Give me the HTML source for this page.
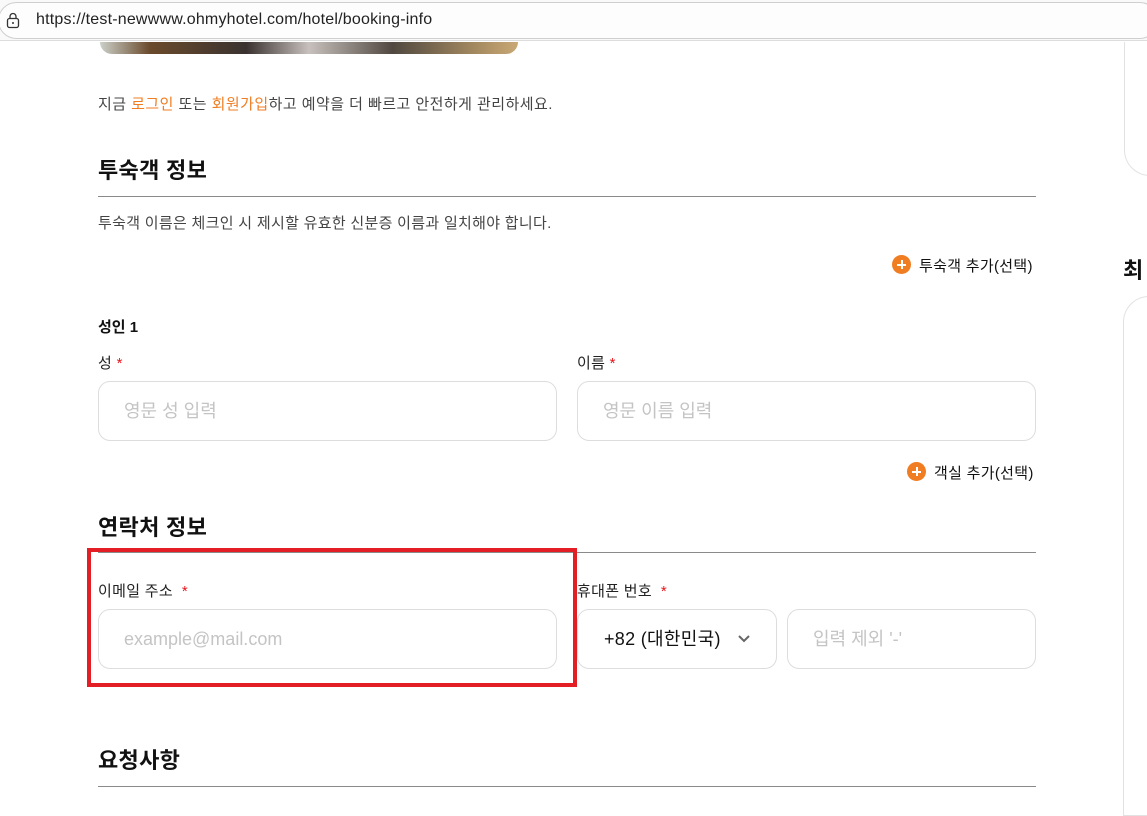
<!DOCTYPE html>
<html><head><meta charset="utf-8"><style>
*{margin:0;padding:0;box-sizing:border-box}
body{width:1147px;height:802px;overflow:hidden;background:#fff;font-family:"Liberation Sans","Noto Sans CJK KR",sans-serif;position:relative;color:#111}
.a{position:absolute}
.bar{left:0;top:0;width:1147px;height:41px;background:#f9f9f9;border-bottom:1px solid #ddd}
.url{left:-2px;top:2px;width:1160px;height:37px;border:1px solid #cfcfcf;border-radius:19px;background:#fdfdfd}
.h{font-size:22px;font-weight:bold;letter-spacing:0.3px}
.hr{height:1px;background:#8a8a8a}
.lbl{font-size:15px;color:#222;letter-spacing:0.3px}
.star{color:#e8141c}
.in{border:1px solid #ddd;border-radius:12px;height:60px;font-size:18px;color:#c4c4c4;padding-left:25px;line-height:58px}
.plus{width:19px;height:19px;border-radius:50%;background:#f07d22}
.plus:before{content:"";position:absolute;left:5px;top:8.5px;width:9px;height:2px;background:#fff}
.plus:after{content:"";position:absolute;left:8.5px;top:5px;width:2px;height:9px;background:#fff}
.add{font-size:15px;color:#111;letter-spacing:0.3px}
</style></head><body>
<div class="a bar"></div>
<div class="a url"></div>
<svg class="a" style="left:6px;top:12px" width="14" height="17" viewBox="0 0 14 17"><rect x="1.5" y="6.5" width="11" height="9" rx="2" fill="none" stroke="#333" stroke-width="1.3"/><path d="M4 6.5V4.5a3 3 0 0 1 6 0v2" fill="none" stroke="#333" stroke-width="1.3"/><circle cx="7" cy="11" r="1" fill="#333"/></svg>
<div class="a" style="left:36px;top:11px;font-size:16px;color:#222;letter-spacing:0.2px">https://test-newwww.ohmyhotel.com/hotel/booking-info</div>
<div class="a" style="left:100px;top:42px;width:418px;height:12px;border-radius:0 0 30px 30px;background:linear-gradient(90deg,#cbd0c8 0%,#6a4a2c 12%,#3a3230 35%,#c8c0bc 50%,#504840 70%,#a58a60 90%,#c9a875 100%)"></div>
<div class="a" style="left:1124px;top:42px;width:40px;height:134px;border:1px solid #e2e2e2;border-top:none;border-radius:0 0 0 26px"></div>
<div class="a" style="left:98px;top:93px;font-size:15px;color:#444;letter-spacing:0.45px">지금 <span style="color:#f07d22">로그인</span> 또는 <span style="color:#f07d22">회원가입</span>하고 예약을 더 빠르고 안전하게 관리하세요.</div>
<div class="a h" style="left:98px;top:153px">투숙객 정보</div>
<div class="a hr" style="left:98px;top:196px;width:938px"></div>
<div class="a" style="left:98px;top:212px;font-size:15px;color:#444;letter-spacing:0.3px">투숙객 이름은 체크인 시 제시할 유효한 신분증 이름과 일치해야 합니다.</div>
<div class="a plus" style="left:892px;top:255px"></div>
<div class="a add" style="left:919px;top:255px">투숙객 추가(선택)</div>
<div class="a h" style="left:1123px;top:253px">최</div>
<div class="a" style="left:1123px;top:296px;width:40px;height:520px;border:1px solid #e2e2e2;border-right:none;border-radius:26px 0 0 0"></div>
<div class="a" style="left:98px;top:316px;font-size:15px;font-weight:bold">성인 1</div>
<div class="a lbl" style="left:98px;top:352px">성 <span class="star">*</span></div>
<div class="a lbl" style="left:577px;top:352px">이름 <span class="star">*</span></div>
<div class="a in" style="left:98px;top:381px;width:459px">영문 성 입력</div>
<div class="a in" style="left:577px;top:381px;width:459px">영문 이름 입력</div>
<div class="a plus" style="left:907px;top:462px"></div>
<div class="a add" style="left:934px;top:462px">객실 추가(선택)</div>
<div class="a h" style="left:98px;top:510px">연락처 정보</div>
<div class="a hr" style="left:98px;top:552px;width:938px"></div>
<div class="a lbl" style="left:98px;top:580px">이메일 주소 &nbsp;<span class="star">*</span></div>
<div class="a lbl" style="left:577px;top:580px">휴대폰 번호 &nbsp;<span class="star">*</span></div>
<div class="a in" style="left:98px;top:609px;width:459px">example@mail.com</div>
<div class="a in" style="left:577px;top:609px;width:200px;color:#111;padding-left:26px;letter-spacing:0.3px">+82 (대한민국)</div>
<svg class="a" style="left:737px;top:634px" width="14" height="10" viewBox="0 0 14 10"><path d="M2 2l5 5 5-5" fill="none" stroke="#666" stroke-width="2"/></svg>
<div class="a in" style="left:787px;top:609px;width:249px">입력 제외 '-'</div>
<div class="a" style="left:87px;top:548px;width:490px;height:139px;border:4px solid #e31e24"></div>
<div class="a h" style="left:98px;top:743px">요청사항</div>
<div class="a hr" style="left:98px;top:786px;width:938px"></div>
</body></html>
